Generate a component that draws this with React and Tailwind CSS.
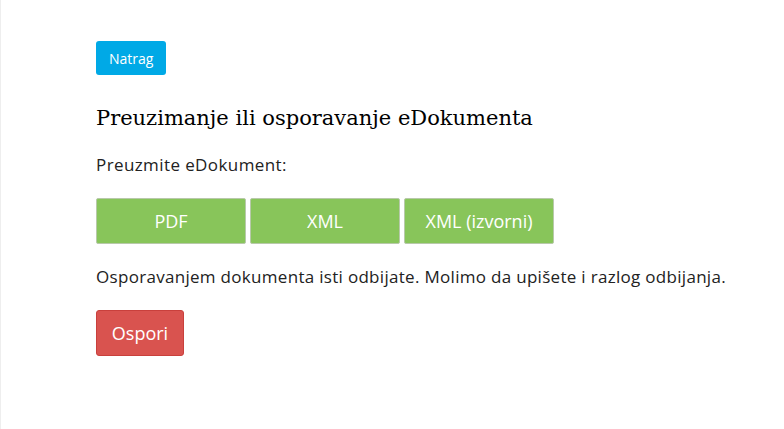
import React from 'react';

function App() {
  const files = ['PDF', 'XML', 'XML (izvorni)'];

  return (
    <div className="min-h-[429px] bg-white border-l border-[#eeeeee]" style={{ fontFamily: '"Open Sans", Lato, sans-serif' }}>
      <div className="pl-[95px] pt-[41px] text-[#222]">
        <button className="h-[34px] px-[13px] rounded-[3px] bg-[#00a9e6] text-white text-[14px]">
          Natrag
        </button>

        <h2 className="mt-[28px] text-[21px] leading-[30px] text-black" style={{ fontFamily: '"DejaVu Serif", "Liberation Serif", serif' }}>
          Preuzimanje ili osporavanje eDokumenta
        </h2>

        <p className="mt-[21px] text-[17px] leading-[22px] tracking-[0.4px]">Preuzmite eDokument:</p>

        <div className="mt-[22px] flex gap-[4px]">
          {files.map((f) => (
            <button
              key={f}
              className="w-[150px] h-[46px] rounded-[2px] bg-[#88c55a] border border-[#b8c9aa] text-white text-[18px]"
            >
              {f}
            </button>
          ))}
        </div>

        <p className="mt-[22px] text-[17px] leading-[22px] tracking-[0.3px]">
          Osporavanjem dokumenta isti odbijate. Molimo da upišete i razlog odbijanja.
        </p>

        <button className="mt-[22px] w-[88px] h-[46px] rounded-[3px] bg-[#d9534f] border border-[#c9403c] text-white text-[18px]">
          Ospori
        </button>
      </div>
    </div>
  );
}

export default App;
